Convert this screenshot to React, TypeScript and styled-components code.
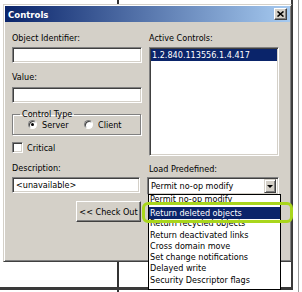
import React from 'react';
import styled, { createGlobalStyle } from 'styled-components';

const FONT = `"DejaVu Sans Condensed", "DejaVu Sans", sans-serif`;

const Global = createGlobalStyle`
  html, body { margin: 0; padding: 0; background: #fff; }
  body { width: 302px; height: 292px; overflow: hidden; font-family: ${FONT}; }
`;

const Stage = styled.div`
  position: relative;
  width: 302px;
  height: 292px;
  overflow: hidden;
  background: #fff;
  padding: 4px 0 0 3px;
  box-sizing: border-box;
  font-family: ${FONT};
  font-size: 9px;
  color: #000;
`;

const BackLine = styled.div<{ $x?: number; $y?: number; $w: number; $h: number; $c: string }>`
  position: absolute;
  left: ${p => p.$x ?? 0}px;
  top: ${p => p.$y ?? 0}px;
  width: ${p => p.$w}px;
  height: ${p => p.$h}px;
  background: ${p => p.$c};
`;

const Dialog = styled.div`
  position: relative;
  z-index: 1;
  width: 289px;
  height: 258px;
  box-sizing: border-box;
  background: #d4d0c8;
  border: 1px solid;
  border-color: #d4d0c8 #404040 #404040 #d4d0c8;
  box-shadow: inset 1px 1px #fff, inset -1px -1px #808080;
  padding: 1px;
  display: flex;
  flex-direction: column;
`;

const TitleBar = styled.div`
  height: 16px;
  background: linear-gradient(to right, #0a246a, #a6caf0);
  display: flex;
  align-items: center;
  justify-content: space-between;
  padding: 0 3px 0 3px;
`;

const Title = styled.span`
  color: #fff;
  font-weight: bold;
  font-size: 9.5px;
`;

const CloseBtn = styled.div`
  width: 13px;
  height: 12px;
  box-sizing: border-box;
  background: #d4d0c8;
  border: 1px solid;
  border-color: #fff #404040 #404040 #fff;
  box-shadow: inset -1px -1px #808080;
  display: flex;
  align-items: center;
  justify-content: center;
`;

const Body = styled.div`
  flex: 1;
  display: grid;
  grid-template-columns: 130px 130px;
  column-gap: 7px;
  padding: 10px 0 0 7px;
`;

const Col = styled.div`
  display: flex;
  flex-direction: column;
`;

const Label = styled.div<{ $mt?: number }>`
  height: 12px;
  line-height: 12px;
  margin-top: ${p => p.$mt ?? 0}px;
  white-space: nowrap;
`;

const Sunken = styled.div`
  box-sizing: border-box;
  background: #fff;
  border: 1px solid;
  border-color: #808080 #fff #fff #808080;
  box-shadow: inset 1px 1px #404040, inset -1px -1px #d4d0c8;
`;

const TextBox = styled(Sunken)<{ $mt?: number; $w?: number }>`
  height: 16px;
  width: ${p => p.$w ?? 130}px;
  margin-top: ${p => p.$mt ?? 3}px;
  padding: 0 3px;
  line-height: 14px;
  white-space: nowrap;
`;

const Group = styled.fieldset`
  margin: 7px 0 0 0;
  padding: 0 0 4px 15px;
  width: 129px;
  box-sizing: border-box;
  border: 1px solid #808080;
  box-shadow: 1px 1px #fff, inset 1px 1px #fff;
  border-radius: 0;
  min-width: 0;
`;

const Legend = styled.legend`
  padding: 0 2px;
  margin-left: -8px;
  line-height: 9px;
  height: 9px;
  font-size: 9px;
`;

const OptionRow = styled.div`
  display: flex;
  align-items: center;
  height: 11px;
`;

const Option = styled.label<{ $w: number }>`
  display: flex;
  align-items: center;
  gap: 5px;
  width: ${p => p.$w}px;
`;

const Radio = styled.span<{ $on?: boolean }>`
  width: 9px;
  height: 9px;
  box-sizing: border-box;
  border-radius: 50%;
  background: #fff;
  border: 1px solid;
  border-color: #808080 #fff #fff #808080;
  box-shadow: inset 1px 1px #404040;
  display: flex;
  align-items: center;
  justify-content: center;
  &::after {
    content: '';
    width: 3px;
    height: 3px;
    border-radius: 50%;
    background: ${p => (p.$on ? '#000' : 'transparent')};
  }
`;

const CheckRow = styled.div`
  display: flex;
  align-items: center;
  gap: 4px;
  margin-top: 7px;
  height: 11px;
`;

const CheckBox = styled(Sunken)`
  width: 11px;
  height: 11px;
`;

const ButtonRow = styled.div`
  display: flex;
  justify-content: flex-end;
  padding-right: 1px;
  margin-top: 8px;
`;

const Button = styled.div`
  width: 65px;
  height: 21px;
  box-sizing: border-box;
  background: #d4d0c8;
  border: 1px solid;
  border-color: #fff #404040 #404040 #fff;
  box-shadow: inset -1px -1px #808080;
  display: flex;
  align-items: center;
  justify-content: center;
  white-space: nowrap;
`;

const ListBox = styled(Sunken)`
  margin-top: 3px;
  height: 109px;
  padding: 1px;
`;

const SelRow = styled.div`
  height: 12px;
  line-height: 12px;
  background: #0a246a;
  color: #fff;
  padding-left: 1px;
  white-space: nowrap;
`;

const Combo = styled(Sunken)`
  margin-top: 2px;
  margin-left: -2px;
  width: 132px;
  height: 18px;
  display: flex;
  align-items: center;
  justify-content: space-between;
  padding: 0 2px 0 3px;
`;

const ArrowBtn = styled.div`
  width: 12px;
  height: 14px;
  box-sizing: border-box;
  background: #d4d0c8;
  border: 1px solid;
  border-color: #d4d0c8 #404040 #404040 #d4d0c8;
  box-shadow: inset 1px 1px #fff, inset -1px -1px #808080;
  display: flex;
  align-items: center;
  justify-content: center;
  &::after {
    content: '';
    border-left: 3px solid transparent;
    border-right: 3px solid transparent;
    border-top: 3px solid #000;
  }
`;

const DropList = styled.div`
  position: absolute;
  z-index: 2;
  left: 148px;
  top: 194px;
  width: 133px;
  height: 96px;
  box-sizing: border-box;
  background: #fff;
  border: 1px solid #000;
  overflow: hidden;
`;

const DropItem = styled.div<{ $sel?: boolean; $mt?: number }>`
  height: ${p => (p.$sel ? 12 : 11.3)}px;
  line-height: ${p => (p.$sel ? 12 : 11.3)}px;
  margin-top: ${p => p.$mt ?? 0}px;
  padding-left: 1px;
  white-space: nowrap;
  position: relative;
  z-index: ${p => (p.$sel ? 1 : 0)};
  background: ${p => (p.$sel ? '#0a246a' : 'transparent')};
  color: ${p => (p.$sel ? '#fff' : '#000')};
`;

const Callout = styled.div`
  position: absolute;
  z-index: 3;
  left: 142px;
  top: 202px;
  width: 151px;
  height: 21px;
  box-sizing: border-box;
  border: 3px solid #a9d61c;
  border-radius: 6px;
`;

const items = [
  'Return recycled objects',
  'Return deactivated links',
  'Cross domain move',
  'Set change notifications',
  'Delayed write',
  'Security Descriptor flags',
];

export default function App() {
  return (
    <>
      <Global />
      <Stage>
        <BackLine $x={117} $w={2} $h={292} $c="#333" />
        <BackLine $x={291} $w={2} $h={290} $c="#3a3a3a" />
        <BackLine $x={298} $w={1} $h={292} $c="#9a9a9a" />
        <BackLine $y={287} $w={293} $h={3} $c="#3a3a3a" />
        <Dialog>
          <TitleBar>
            <Title>Controls</Title>
            <CloseBtn>
              <svg width="7" height="6" viewBox="0 0 7 6">
                <path d="M0.5 0.5 L6.5 5.5 M6.5 0.5 L0.5 5.5" stroke="#000" strokeWidth="1.6" />
              </svg>
            </CloseBtn>
          </TitleBar>
          <Body>
            <Col>
              <Label>Object Identifier:</Label>
              <TextBox />
              <Label $mt={8}>Value:</Label>
              <TextBox $mt={4} />
              <Group>
                <Legend>Control Type</Legend>
                <OptionRow>
                  <Option $w={56}>
                    <Radio $on />
                    Server
                  </Option>
                  <Option $w={50}>
                    <Radio />
                    Client
                  </Option>
                </OptionRow>
              </Group>
              <CheckRow>
                <CheckBox />
                Critical
              </CheckRow>
              <Label $mt={9}>Description:</Label>
              <TextBox $mt={3} $w={128}>&lt;unavailable&gt;</TextBox>
              <ButtonRow>
                <Button>&lt;&lt; Check Out</Button>
              </ButtonRow>
            </Col>
            <Col>
              <Label>Active Controls:</Label>
              <ListBox>
                <SelRow>1.2.840.113556.1.4.417</SelRow>
              </ListBox>
              <Label $mt={7}>Load Predefined:</Label>
              <Combo>
                <span>Permit no-op modify</span>
                <ArrowBtn />
              </Combo>
            </Col>
          </Body>
        </Dialog>
        <DropList>
          <DropItem $mt={-1}>Permit no-op modify</DropItem>
          <DropItem $sel $mt={2}>Return deleted objects</DropItem>
          {items.map((t, i) => (
            <DropItem key={t} $mt={i === 0 ? -1 : 0}>{t}</DropItem>
          ))}
        </DropList>
        <Callout />
      </Stage>
    </>
  );
}
